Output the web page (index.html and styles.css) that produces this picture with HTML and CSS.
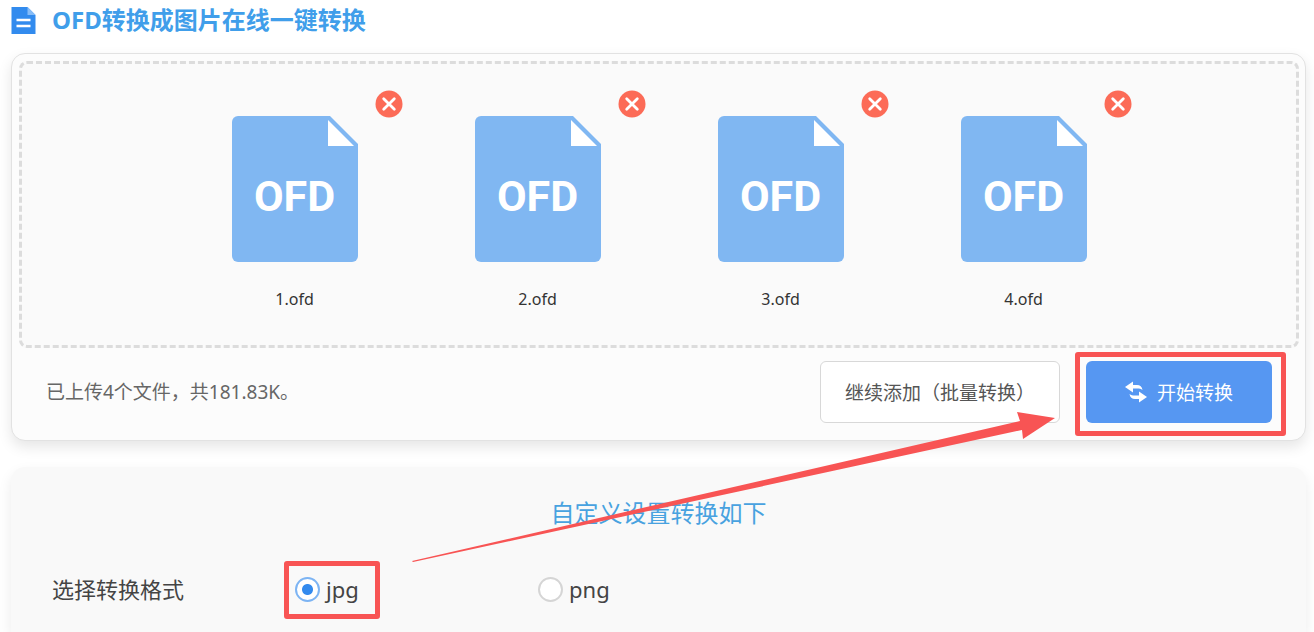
FILE: index.html
```html
<!DOCTYPE html>
<html lang="zh-CN">
<head>
    <meta charset="UTF-8">
    <meta name="viewport" content="width=device-width, initial-scale=1.0">
    <title>OFD转换成图片在线一键转换</title>
    <link rel="stylesheet" href="styles.css">
</head>
<body>
    <!-- Иконки -->
    <svg class="sprite" aria-hidden="true">
        <symbol id="icon-ofd" viewBox="0 0 126 146">
            <path fill="#80b7f2" d="M6 0H98L126 28V140a6 6 0 0 1-6 6H6a6 6 0 0 1-6-6V6a6 6 0 0 1 6-6z"/>
            <path fill="#fff" d="M96 4V30H122z"/>
        </symbol>
        <symbol id="icon-close" viewBox="0 0 28 28">
            <circle cx="14" cy="14" r="13.5" fill="#fc6b57"/>
            <path d="M8.7 8.7l10.6 10.6M19.3 8.7L8.7 19.3" stroke="#fff" stroke-width="2.8" stroke-linecap="round"/>
        </symbol>
    </svg>

    <header class="page-header">
        <svg class="doc-icon" viewBox="0 0 24 27" aria-hidden="true">
            <path fill="#328bee" d="M0 0H16L24 8V27H0z"/>
            <path fill="#86bcf7" d="M16 0L24 8H16z"/>
            <path d="M5 13H19M5 19H19" stroke="#fff" stroke-width="2.4"/>
        </svg>
        <h1>OFD转换成图片在线一键转换</h1>
    </header>

    <section class="upload-card">
        <ul class="file-list">
            <li class="file">
                <button class="file-remove" type="button" aria-label="删除 1.ofd"><svg><use href="#icon-close"/></svg></button>
                <div class="file-icon"><svg><use href="#icon-ofd"/></svg><span>OFD</span></div>
                <p>1.ofd</p>
            </li>
            <li class="file">
                <button class="file-remove" type="button" aria-label="删除 2.ofd"><svg><use href="#icon-close"/></svg></button>
                <div class="file-icon"><svg><use href="#icon-ofd"/></svg><span>OFD</span></div>
                <p>2.ofd</p>
            </li>
            <li class="file">
                <button class="file-remove" type="button" aria-label="删除 3.ofd"><svg><use href="#icon-close"/></svg></button>
                <div class="file-icon"><svg><use href="#icon-ofd"/></svg><span>OFD</span></div>
                <p>3.ofd</p>
            </li>
            <li class="file">
                <button class="file-remove" type="button" aria-label="删除 4.ofd"><svg><use href="#icon-close"/></svg></button>
                <div class="file-icon"><svg><use href="#icon-ofd"/></svg><span>OFD</span></div>
                <p>4.ofd</p>
            </li>
        </ul>
        <div class="upload-footer">
            <p class="upload-info">已上传4个文件，共181.83K。</p>
            <button class="btn btn-add" type="button">继续添加（批量转换）</button>
            <div class="start-wrap">
                <button class="btn btn-start" type="button">
                    <svg viewBox="0 0 22 22" aria-hidden="true">
                        <path fill="#fff" d="M0 6L8 0.500V4H12C15 4 17 5.500 17.500 9C16 7.700 14.500 7.500 12 7.500H8V11.500z"/>
                        <path fill="#fff" d="M22 16L14 21.500V18H10C7 18 5 16.500 4.500 13C6 14.300 7.500 14.500 10 14.500H14V10.500z"/>
                    </svg>
                    开始转换
                </button>
                <!-- Стрелка-подсказка к кнопке -->
                <svg class="arrow" viewBox="0 0 644 151" aria-hidden="true">
                    <path fill="#f85454" d="M0 149L608 9L605 0L643 6L611 27L610 18L1 150z"/>
                </svg>
            </div>
        </div>
    </section>

    <section class="settings-card">
        <h2>自定义设置转换如下</h2>
        <div class="setting-row" role="radiogroup" aria-labelledby="format-label">
            <span class="setting-label" id="format-label">选择转换格式</span>
            <div class="option">
                <label class="marked"><input type="radio" name="format" value="jpg" checked>jpg</label>
            </div>
            <div class="option">
                <label><input type="radio" name="format" value="png">png</label>
            </div>
        </div>
    </section>
</body>
</html>
```
FILE: styles.css
```css
* {
    margin: 0;
    padding: 0;
    box-sizing: border-box;
}

body {
    background-color: #fff;
    color: #444;
    font-family: 'Noto Sans', 'Noto Sans CJK SC', sans-serif;
    display: flex;
    flex-direction: column;
    min-height: 100vh;
    padding: 0 8px 0 11px;
}

button {
    font-family: inherit;
    cursor: pointer;
}

.sprite {
    position: absolute;
    width: 0;
    height: 0;
}

.page-header {
    display: flex;
    align-items: center;
    gap: 16px;
    height: 40px;
    margin-bottom: 13px;
}

.doc-icon {
    width: 25px;
    height: 27px;
}

.page-header h1 {
    color: #409eea;
    font-size: 24px;
    line-height: 36px;
    font-weight: 700;
}

.upload-card {
    background-color: #fcfcfc;
    border: 1px solid #e2e2e2;
    border-radius: 14px;
    box-shadow: 0 6px 14px rgba(0, 0, 0, 0.1);
    padding: 7px 6px 0 7px;
}

.file-list {
    display: flex;
    justify-content: center;
    list-style: none;
    background-color: #fafafa;
    border: 3px dashed #dcdcdc;
    border-radius: 8px;
    padding: 26px 0 33px;
}

.file {
    position: relative;
    width: 243px;
    padding-top: 26px;
    text-align: center;
}

.file-remove {
    position: absolute;
    top: 0;
    right: 13px;
    width: 28px;
    height: 28px;
    border: none;
    background: none;
}

.file-remove svg {
    display: block;
    width: 28px;
    height: 28px;
}

.file-icon {
    position: relative;
    width: 126px;
    height: 146px;
    margin: 0 auto 24px;
}

.file-icon svg {
    display: block;
    width: 126px;
    height: 146px;
}

.file-icon span {
    position: absolute;
    top: 55px;
    left: 0;
    width: 100%;
    color: #fff;
    font-family: Roboto, sans-serif;
    font-size: 43px;
    line-height: 50px;
    font-weight: 700;
}

.file p {
    color: #333;
    font-size: 16px;
    line-height: 26px;
}

.upload-footer {
    display: flex;
    align-items: center;
    padding: 13px 27px 17px;
}

.upload-info {
    flex: 1;
    color: #666;
    font-size: 19px;
    line-height: 28px;
}

.btn {
    height: 62px;
    border-radius: 6px;
    font-size: 19px;
}

.btn-add {
    width: 240px;
    margin-right: 26px;
    background-color: #fff;
    border: 1px solid #d8d8d8;
    color: #555;
}

.start-wrap {
    position: relative;
}

.start-wrap::before {
    content: '';
    position: absolute;
    inset: -9px -14px -13px -11px;
    border: 5px solid #f85454;
    border-radius: 3px;
    pointer-events: none;
}

.btn-start {
    display: flex;
    align-items: center;
    justify-content: center;
    gap: 10px;
    width: 186px;
    background-color: #5697f2;
    border: none;
    color: #fff;
}

.btn-start svg {
    width: 22px;
    height: 22px;
}

.arrow {
    position: absolute;
    top: 51px;
    right: 216px;
    width: 644px;
    height: 151px;
    pointer-events: none;
}

.settings-card {
    flex: 1;
    margin-top: 26px;
    padding: 26px 41px 24px;
    background-color: #f9f9f9;
    border-radius: 14px 14px 0 0;
    box-shadow: 0 6px 14px rgba(0, 0, 0, 0.08);
}

.settings-card h2 {
    color: #48a2e0;
    font-size: 24px;
    line-height: 40px;
    font-weight: 400;
    text-align: center;
}

.setting-row {
    display: flex;
    align-items: center;
    margin-top: 36px;
    line-height: 40px;
}

.setting-label {
    width: 243px;
    font-size: 22px;
}

.option {
    display: flex;
    width: 243px;
}

.option label {
    position: relative;
    display: flex;
    align-items: center;
    gap: 6px;
    font-size: 22px;
    cursor: pointer;
}

.option input {
    appearance: none;
    width: 25px;
    height: 25px;
    border: 2px solid #d5d5d5;
    border-radius: 50%;
    background-color: #fff;
}

.option input:checked {
    border-color: #7db4f3;
    background-image: radial-gradient(circle, #338aee 5px, transparent 6px);
}

.option .marked::after {
    content: '';
    position: absolute;
    inset: -8px -21px -10px -11px;
    border: 5px solid #f85454;
    border-radius: 3px;
    pointer-events: none;
}
```
